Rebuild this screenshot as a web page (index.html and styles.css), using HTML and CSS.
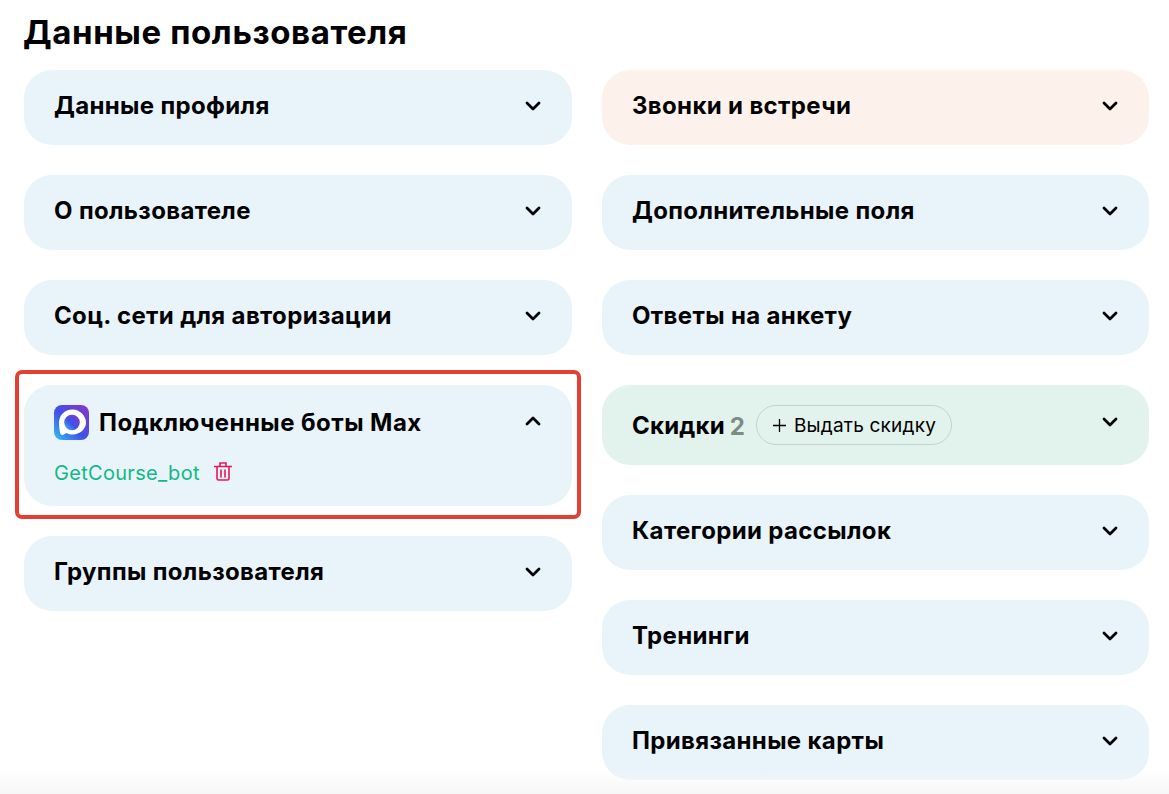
FILE: index.html
```html
<!DOCTYPE html>
<html lang="ru">
<head>
<meta charset="utf-8">
<title>Данные пользователя</title>
<link rel="stylesheet" href="styles.css">
</head>
<body>
<h1 class="title">Данные пользователя</h1>
<div class="columns">
  <div class="col">
    <div class="card"><span class="card-title">Данные профиля</span><svg class="chev" viewBox="0 0 16 10"><path d="M2 2l6 6 6-6"/></svg></div>
    <div class="card"><span class="card-title">О пользователе</span><svg class="chev" viewBox="0 0 16 10"><path d="M2 2l6 6 6-6"/></svg></div>
    <div class="card"><span class="card-title">Соц. сети для авторизации</span><svg class="chev" viewBox="0 0 16 10"><path d="M2 2l6 6 6-6"/></svg></div>
    <div class="card card-open">
      <div class="open-head">
        <svg class="logo" viewBox="0 0 35 35">
          <defs><linearGradient id="g" x1="0" y1="1" x2="1" y2="0"><stop offset="0" stop-color="#35c3f5"/><stop offset=".45" stop-color="#3f50ea"/><stop offset="1" stop-color="#8a35c8"/></linearGradient></defs>
          <rect width="35" height="35" rx="8" fill="url(#g)"/>
          <path d="M18.500 4.500C10.500 4.500 5 10.500 5 17.500c0 4 .4 7 1 10 .4 2 1.600 3 3.200 2.200 1.300-.6 2.300-1.400 3.500-1.800 1.700 1 3.600 1.600 5.800 1.600 7.500 0 13.500-5.500 13.500-12S26 4.500 18.500 4.500z" fill="#fff"/>
          <circle cx="18" cy="17.500" r="7.800" fill="url(#g)"/>
        </svg>
        <span class="card-title">Подключенные боты Max</span>
        <svg class="chev chev-up" viewBox="0 0 16 10"><path d="M2 8l6-6 6 6"/></svg>
      </div>
      <div class="bot-row">
        <span class="bot-link">GetCourse_bot</span>
        <svg class="trash" viewBox="0 0 18 19"><path d="M0 4.500h18M6 4.500V1h6v3.500M3 4.500v12a1.500 1.500 0 0 0 1.500 1.500h9a1.500 1.500 0 0 0 1.500-1.500v-12M7 7.500v8M11 7.500v8"/></svg>
      </div>
      <div class="highlight"></div>
    </div>
    <div class="card"><span class="card-title">Группы пользователя</span><svg class="chev" viewBox="0 0 16 10"><path d="M2 2l6 6 6-6"/></svg></div>
  </div>
  <div class="col">
    <div class="card card-orange"><span class="card-title">Звонки и встречи</span><svg class="chev" viewBox="0 0 16 10"><path d="M2 2l6 6 6-6"/></svg></div>
    <div class="card"><span class="card-title">Дополнительные поля</span><svg class="chev" viewBox="0 0 16 10"><path d="M2 2l6 6 6-6"/></svg></div>
    <div class="card"><span class="card-title">Ответы на анкету</span><svg class="chev" viewBox="0 0 16 10"><path d="M2 2l6 6 6-6"/></svg></div>
    <div class="card card-green">
      <span class="card-title">Скидки</span><span class="count">2</span>
      <span class="pill"><svg class="plus" viewBox="0 0 13 13"><path d="M6.500 0v13M0 6.500h13"/></svg>Выдать скидку</span>
      <svg class="chev chev-green" viewBox="0 0 16 10"><path d="M2 2l6 6 6-6"/></svg>
    </div>
    <div class="card"><span class="card-title">Категории рассылок</span><svg class="chev" viewBox="0 0 16 10"><path d="M2 2l6 6 6-6"/></svg></div>
    <div class="card"><span class="card-title">Тренинги</span><svg class="chev" viewBox="0 0 16 10"><path d="M2 2l6 6 6-6"/></svg></div>
    <div class="card"><span class="card-title">Привязанные карты</span><svg class="chev" viewBox="0 0 16 10"><path d="M2 2l6 6 6-6"/></svg></div>
  </div>
</div>
<div class="bottom-fade"></div>
</body>
</html>
```
FILE: styles.css
```css
* { box-sizing: border-box; }
html, body { margin: 0; height: 794px; overflow: hidden; background: #fff; }
body { padding: 0 20px 0 24px; font-family: "Inter", sans-serif; color: #000; position: relative; }
.title { margin: 0 0 0 -1px; height: 70px; padding-top: 10px; font-size: 33px; line-height: 44px; font-weight: 700; letter-spacing: .6px; }
.columns { display: grid; grid-template-columns: 548px 547px; column-gap: 30px; }
.col { display: flex; flex-direction: column; gap: 30px; }
.card { position: relative; height: 75px; padding: 0 31px 4px 30px; display: flex; align-items: center; background: #e8f3fa; border-radius: 28px; }
.card-title { font-size: 24px; font-weight: 700; line-height: 30px; letter-spacing: .35px; }
.chev { width: 16px; height: 10px; margin-left: auto; margin-top: 1px; fill: none; stroke: #000; stroke-width: 2.800; stroke-linecap: round; stroke-linejoin: round; }
.card-orange { background: #fdf1ec; }
.card-green { height: 80px; background: #e2f2ed; padding-bottom: 0; }
.card-green .card-title { padding-top: 2px; letter-spacing: .2px; }
.chev-green { margin-top: -7px; }
.count { margin-left: 5px; padding-top: 2px; font-size: 24px; font-weight: 700; color: #7d8a86; }
.pill { margin-left: 11px; height: 40px; padding: 0 15px 0 16px; display: flex; align-items: center; border: 1px solid #c3d3ce; border-radius: 20px; font-size: 19px; letter-spacing: .2px; }
.plus { width: 13px; height: 13px; margin-right: 8px; fill: none; stroke: #000; stroke-width: 1.300; }
.card-open { height: 121px; display: block; padding: 20px 31px 0 30px; }
.card-open .card-title { letter-spacing: .45px; }
.open-head { display: flex; align-items: center; gap: 10px; height: 35px; }
.logo { width: 35px; height: 35px; flex: none; }
.chev-up { margin-top: -3px; }
.bot-row { margin-top: 18px; display: flex; align-items: center; gap: 14px; height: 30px; }
.bot-link { font-size: 20px; letter-spacing: .3px; color: #12b886; }
.trash { width: 18px; height: 19px; margin-top: -3px; fill: none; stroke: #e8175d; stroke-width: 1.600; }
.highlight { position: absolute; left: -9px; top: -15px; width: 566px; height: 149px; border: 4px solid #e53e33; border-radius: 7px; }
.bottom-fade { position: absolute; left: 0; right: 0; bottom: 0; height: 26px; background: linear-gradient(rgba(247,247,247,0), #f7f7f7); pointer-events: none; }
```
